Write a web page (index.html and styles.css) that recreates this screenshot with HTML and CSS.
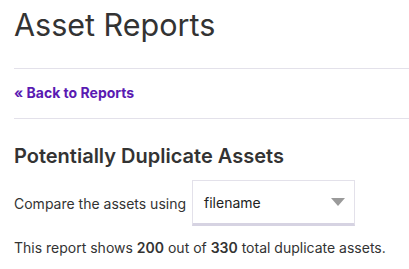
FILE: index.html
```html
<!DOCTYPE html>
<html lang="en">
<head>
    <meta charset="UTF-8">
    <meta name="viewport" content="width=device-width, initial-scale=1.0">
    <title>Asset Reports</title>
    <link rel="stylesheet" href="styles.css">
</head>
<body>
    <div class="page">
        <h1 class="page-title">Asset Reports</h1>
        <div class="back-bar">
            <a class="back-link" href="#">&laquo; Back to Reports</a>
        </div>
        <h2 class="section-title">Potentially Duplicate Assets</h2>
        <div class="compare-row">
            <span>Compare the assets using</span>
            <div class="select">
                <span>filename</span>
                <svg class="caret" width="14" height="8" viewBox="0 0 14 8"><path d="M0 0h14L7 8z" fill="#9a9a9a"/></svg>
            </div>
        </div>
        <p class="summary">This report shows <b>200</b> out of <b>330</b> total duplicate assets.</p>
    </div>
</body>
</html>
```

FILE: styles.css
```css
body {
    margin: 0;
    font-family: Inter, "Noto Sans", sans-serif;
    color: #333;
    background: #fff;
}
.page {
    padding-left: 14px;
}
.page-title {
    font-size: 30.5px;
    font-weight: 400;
    line-height: 36px;
    margin: 7px 0 0;
    color: #333;
}
.back-bar {
    margin-top: 25px;
    border-top: 1px solid #e3e1ea;
    border-bottom: 1px solid #e3e1ea;
    padding: 13px 0 15px;
    line-height: 20px;
}
.back-link {
    font-size: 14px;
    font-weight: 700;
    color: #5a1ab2;
    text-decoration: none;
}
.section-title {
    font-size: 20px;
    font-weight: 600;
    line-height: 24px;
    margin: 25px 0 0;
    color: #333;
}
.compare-row {
    display: flex;
    align-items: center;
    gap: 6px;
    margin-top: 12px;
    font-size: 14px;
}
.select {
    width: 163px;
    height: 46px;
    box-sizing: border-box;
    border: 1px solid #e3e1ea;
    border-bottom: 3px solid #d6d3e2;
    display: flex;
    align-items: center;
    justify-content: space-between;
    padding: 0 9px 0 11px;
    color: #222;
}
.summary {
    font-size: 14px;
    line-height: 20px;
    margin: 12px 0 0;
}
.summary b {
    font-weight: 600;
}
```
